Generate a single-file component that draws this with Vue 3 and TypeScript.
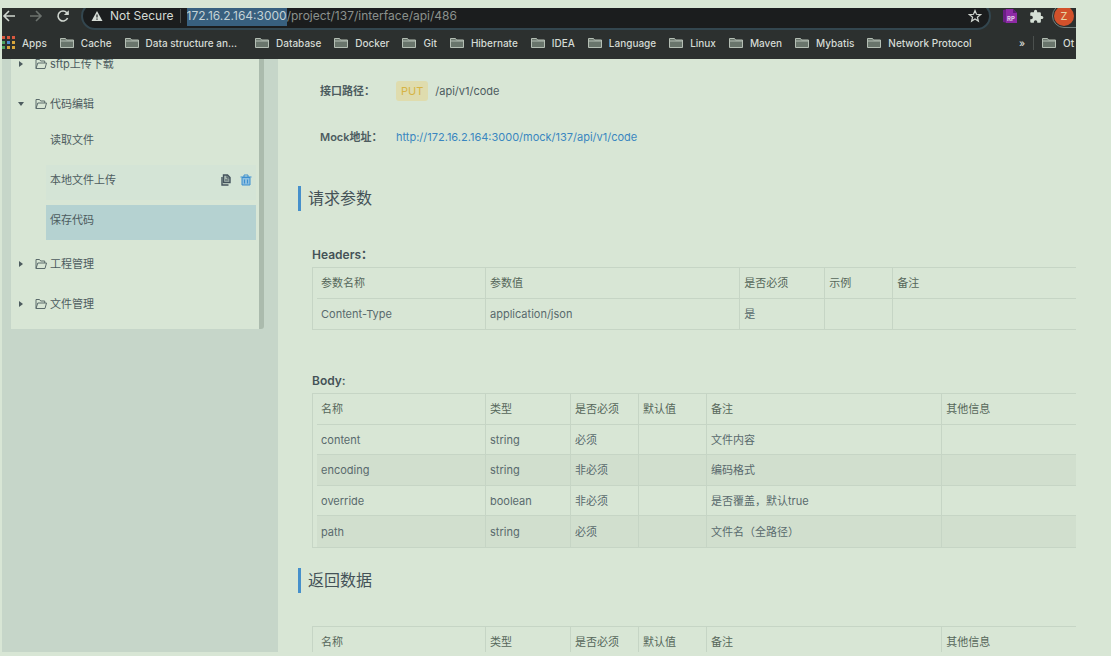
<script setup lang="ts">
import { onMounted, ref } from 'vue'

interface Field {
  name: string
  type: string
  required: string
  preset: string
  note: string
  extra: string
}

const url = ref('172.16.2.164:3000/project/137/interface/api/486')
const host = '172.16.2.164:3000'
const address = ref<HTMLInputElement | null>(null)

const bookmarks: string[] = [
  'Cache', 'Data structure an...', 'Database', 'Docker', 'Git', 'Hibernate', 'IDEA',
  'Language', 'Linux', 'Maven', 'Mybatis', 'Network Protocol',
]

const appColors: string[] = [
  '#d9583f', '#d9583f', '#d9583f',
  '#4fa35c', '#4b8bd0', '#d8a63c',
  '#4fa35c', '#d8a63c', '#d8a63c',
]

const folders = [
  { name: 'sftp上传下载', open: false, items: [] as string[] },
  { name: '代码编辑', open: true, items: ['读取文件', '本地文件上传', '保存代码'] },
  { name: '工程管理', open: false, items: [] as string[] },
  { name: '文件管理', open: false, items: [] as string[] },
]
const hovered = '本地文件上传'
const selected = ref('保存代码')

const headerColumns: string[] = ['参数名称', '参数值', '是否必须', '示例', '备注']
const bodyColumns: string[] = ['名称', '类型', '是否必须', '默认值', '备注', '其他信息']

const fields: Field[] = [
  { name: 'content', type: 'string', required: '必须', preset: '', note: '文件内容', extra: '' },
  { name: 'encoding', type: 'string', required: '非必须', preset: '', note: '编码格式', extra: '' },
  { name: 'override', type: 'boolean', required: '非必须', preset: '', note: '是否覆盖，默认true', extra: '' },
  { name: 'path', type: 'string', required: '必须', preset: '', note: '文件名（全路径）', extra: '' },
]

onMounted(() => {
  address.value?.focus()
  address.value?.setSelectionRange(0, host.length)
})
</script>

<template>
  <div class="page">
    <div class="frame">
      <header class="chrome">
        <div class="toolbar">
          <div class="nav">
            <button type="button" aria-label="Back">
              <svg class="line" viewBox="0 0 14 14" width="14" height="14"><path d="M13 7H2M7 2L2 7l5 5" /></svg>
            </button>
            <button type="button" aria-label="Forward" class="dim">
              <svg class="line" viewBox="0 0 14 14" width="14" height="14"><path d="M1 7h11M7 2l5 5-5 5" /></svg>
            </button>
            <button type="button" aria-label="Reload">
              <svg class="line" viewBox="0 0 14 14" width="14" height="14">
                <path d="M11.6 9A5 5 0 1 1 10.8 3.7L12 5" />
                <path class="solid" d="M12.8 1.2v4.9H7.9z" />
              </svg>
            </button>
          </div>
          <div class="omnibox">
            <svg viewBox="0 0 12 12" width="12" height="12">
              <path d="M6 1l5.5 10H.5z" fill="#d5dbd5" />
              <path d="M6 4.5v3M6 8.5v1.2" stroke="#1b1d1e" stroke-width="1.2" />
            </svg>
            <label for="address">Not Secure</label>
            <span class="bar"></span>
            <input id="address" ref="address" v-model="url" type="text" spellcheck="false" />
            <button type="button" aria-label="Bookmark this page">
              <svg class="line thin" viewBox="0 0 14 14" width="14" height="14">
                <path d="M7 1.6l1.5 3.7 4 .3-3.1 2.6 1 3.9L7 10l-3.4 2.1 1-3.9-3.1-2.6 4-.3z" />
              </svg>
            </button>
          </div>
          <div class="extensions">
            <button type="button" class="rp" aria-label="RP extension">
              <svg viewBox="0 0 14 14" width="14" height="14">
                <path d="M0 1l4-1v14l-4-1z" fill="#6b1f85" />
                <path d="M3 0h7l4 4v10H3z" fill="#8d2aa5" />
                <path d="M10 0l4 4h-4z" fill="#5b1a74" />
                <text x="4" y="12" font-size="6" font-weight="700" fill="#e6cfe9">RP</text>
              </svg>
            </button>
            <button type="button" aria-label="Extensions">
              <svg viewBox="0 0 24 24" width="15" height="15">
                <path fill="#d5dfd5" d="M20.5 11H19V7c0-1.1-.9-2-2-2h-4V3.5a2.5 2.5 0 0 0-5 0V5H4c-1.1 0-2 .9-2 2v3.8h1.5a2.7 2.7 0 0 1 0 5.4H2V20c0 1.1.9 2 2 2h3.8v-1.5a2.7 2.7 0 0 1 5.4 0V22H17c1.1 0 2-.9 2-2v-4h1.5a2.5 2.5 0 0 0 0-5z" />
              </svg>
            </button>
            <button type="button" class="profile" aria-label="Profile"><span>Z</span></button>
          </div>
        </div>

        <nav class="bookmarks">
          <a href="#">
            <span class="dots"><i v-for="(c, i) in appColors" :key="i" :style="{ background: c }"></i></span>
            Apps
          </a>
          <a v-for="b in bookmarks" :key="b" href="#" :class="{ truncated: b.endsWith('...') }">
            <svg viewBox="0 0 14 12" width="14" height="12"><path d="M.5 10.5v-9h5l1 1.5h7v7.500z" fill="#69756c" stroke="#b4beb4" /><path d="M.5 4h13" stroke="#b4beb4" /></svg>
            {{ b }}
          </a>
          <div class="more">
            <button type="button" aria-label="More bookmarks">»</button>
            <span class="bar"></span>
            <a href="#">
              <svg viewBox="0 0 14 12" width="14" height="12"><path d="M.5 10.5v-9h5l1 1.5h7v7.500z" fill="#69756c" stroke="#b4beb4" /><path d="M.5 4h13" stroke="#b4beb4" /></svg>
              Ot
            </a>
          </div>
        </nav>
      </header>

      <div class="main">
        <aside class="sidebar">
          <div class="scroller">
            <ul class="tree">
              <li v-for="f in folders" :key="f.name">
                <button type="button" class="folder" :aria-expanded="f.open">
                  <svg class="caret" :class="{ open: f.open }" viewBox="0 0 6 6" width="6" height="6"><path d="M1 0l4 3-4 3z" /></svg>
                  <svg class="dir" viewBox="0 0 12 12" width="12" height="12">
                    <path d="M1 10.5v-9h3.5l1.2 1.5h4V5M1 10.5L2.800 5h8.700L10 10.5z" />
                  </svg>
                  {{ f.name }}
                </button>
                <ul v-if="f.open" class="leaves">
                  <li v-for="item in f.items" :key="item" :class="{ selected: item === selected, hovered: item === hovered }">
                    <a href="#" @click.prevent="selected = item">{{ item }}</a>
                    <span v-if="item === hovered" class="actions">
                      <button type="button" aria-label="复制">
                        <svg viewBox="0 0 12 12" width="12" height="12">
                          <path d="M3.5 1h4L10 3.5v5H3.5z" fill="#a9b9b2" stroke="#44535c" stroke-width="1.4" />
                          <path d="M2 3v8h6.5" fill="none" stroke="#44535c" stroke-width="1.4" />
                          <path d="M7 1v3h3M5 6h3.5" fill="none" stroke="#44535c" />
                        </svg>
                      </button>
                      <button type="button" aria-label="删除">
                        <svg viewBox="0 0 12 12" width="12" height="12">
                          <path d="M2 3.5h8v7.500H2z" fill="#8dbfe0" stroke="#3c8fd0" />
                          <path d="M.5 3h11M4 3V1h4v2M4.5 5.5v4M7.5 5.5v4" fill="none" stroke="#3c8fd0" />
                        </svg>
                      </button>
                    </span>
                  </li>
                </ul>
              </li>
            </ul>
          </div>
        </aside>

        <main class="content">
          <dl class="facts">
            <dt>接口路径：</dt>
            <dd><span class="method">PUT</span>/api/v1/code</dd>
            <dt>Mock地址：</dt>
            <dd><a href="#">http://172.16.2.164:3000/mock/137/api/v1/code</a></dd>
          </dl>

          <h2>请求参数</h2>
          <h3 id="headers-title">Headers：</h3>
          <div class="grid">
            <table aria-labelledby="headers-title">
              <colgroup>
                <col class="c-name" /><col class="c-value" /><col class="c-type" /><col class="c-flag" /><col />
              </colgroup>
              <thead><tr><th v-for="c in headerColumns" :key="c">{{ c }}</th></tr></thead>
              <tbody>
                <tr><td>Content-Type</td><td>application/json</td><td>是</td><td></td><td></td></tr>
              </tbody>
            </table>
          </div>

          <h3 id="body-title" class="second">Body:</h3>
          <div class="grid">
            <table aria-labelledby="body-title">
              <colgroup>
                <col class="c-name" /><col class="c-type" /><col class="c-flag" /><col class="c-flag" /><col class="c-note" /><col />
              </colgroup>
              <thead><tr><th v-for="c in bodyColumns" :key="c">{{ c }}</th></tr></thead>
              <tbody>
                <tr v-for="f in fields" :key="f.name">
                  <td>{{ f.name }}</td><td>{{ f.type }}</td><td>{{ f.required }}</td>
                  <td>{{ f.preset }}</td><td>{{ f.note }}</td><td>{{ f.extra }}</td>
                </tr>
              </tbody>
            </table>
          </div>

          <h2 id="result-title" class="result">返回数据</h2>
          <div class="grid">
            <table aria-labelledby="result-title">
              <colgroup>
                <col class="c-name" /><col class="c-type" /><col class="c-flag" /><col class="c-flag" /><col class="c-note" /><col />
              </colgroup>
              <thead><tr><th v-for="c in bodyColumns" :key="c">{{ c }}</th></tr></thead>
            </table>
          </div>
        </main>
      </div>
    </div>
  </div>
</template>

<style>
body {
  margin: 0;
  background: #d8e6d5;
}
</style>

<style scoped>
* {
  box-sizing: border-box;
}
.page {
  height: 100vh;
  padding: 8px 35px 4px 2px;
  background: #d8e6d5;
  color: #4d5c5f;
  font: 11px/20px Inter, "Noto Sans CJK SC", sans-serif;
}
.frame {
  height: 100%;
  display: flex;
  flex-direction: column;
  overflow: hidden;
}
button {
  padding: 0;
  border: 0;
  background: none;
  color: inherit;
  font: inherit;
  display: flex;
  align-items: center;
}
a {
  color: inherit;
  text-decoration: none;
}
ul {
  margin: 0;
  padding: 0;
  list-style: none;
}

/* browser bars */
.chrome {
  flex: none;
  height: 51px;
  display: flex;
  flex-direction: column;
  justify-content: flex-end;
  overflow: hidden;
  background: #2c302f;
  color: #d5dbd5;
}
.toolbar {
  flex: none;
  height: 28px;
  display: flex;
  align-items: center;
}
.nav {
  width: 79px;
  display: flex;
  gap: 13px;
}
.line {
  fill: none;
  stroke: #d0d6d0;
  stroke-width: 1.6;
}
.line.thin {
  stroke-width: 1.2;
}
.dim .line {
  stroke: #6c726e;
}
.solid {
  fill: #d0d6d0;
  stroke: none;
}
.omnibox {
  flex: 1;
  height: 28px;
  padding: 0 7px 0 8px;
  display: flex;
  align-items: center;
  border: 2px solid #33464f;
  border-radius: 14px;
  background: #1b1d1e;
  font-size: 12px;
}
.omnibox label {
  margin-left: 7px;
  white-space: nowrap;
}
.bar {
  flex: none;
  width: 1px;
  height: 14px;
  margin: 0 6px;
  background: #4b504e;
}
.omnibox input {
  flex: 1;
  min-width: 0;
  padding: 0;
  border: 0;
  outline: 0;
  background: none;
  color: #8b918d;
  font: inherit;
}
.omnibox input::selection {
  background: #38607f;
  color: #c3d2d6;
}
.extensions {
  flex: none;
  width: 85px;
  padding-left: 12px;
  display: flex;
  align-items: center;
  gap: 8px;
  overflow: hidden;
}
.extensions button {
  flex: none;
}
.rp {
  margin-right: 4px;
}
.profile {
  width: 40px;
  height: 24px;
  padding-left: 1px;
  border: 1px solid #71807f;
  border-radius: 12px;
}
.profile span {
  width: 20px;
  height: 20px;
  border-radius: 50%;
  background: #d2512b;
  color: #e8d4a4;
  text-align: center;
}
.bookmarks {
  flex: none;
  height: 29px;
  padding-bottom: 4px;
  display: flex;
  align-items: center;
  gap: 13px;
  font-size: 10px;
  font-weight: 500;
  white-space: nowrap;
}
.bookmarks a {
  display: flex;
  align-items: center;
  gap: 7px;
}
.bookmarks .truncated {
  padding-right: 5px;
}
.bookmarks svg {
  flex: none;
}
.dots {
  display: grid;
  grid-template-columns: repeat(3, 3px);
  gap: 2px;
}
.dots i {
  height: 3px;
}
.more {
  width: 57px;
  margin-left: auto;
  display: flex;
  align-items: center;
  overflow: hidden;
}
.more .bar {
  margin: 0 8px;
}

/* interface tree */
.main {
  flex: 1;
  min-height: 0;
  display: flex;
  overflow: hidden;
}
.sidebar {
  flex: none;
  width: 276px;
  padding: 0 14px 0 9px;
  background: #c6d6c9;
}
.scroller {
  border-right: 5px solid #abbbad;
  border-bottom-right-radius: 3px;
  overflow: hidden;
}
.tree {
  margin-top: -15px;
  padding: 0 3px 5px 7px;
  background: #d8e6d5;
}
.folder {
  height: 40px;
}
.caret {
  margin-right: 11px;
  fill: #4d5c5f;
}
.caret.open {
  transform: rotate(90deg);
}
.dir {
  margin-right: 3px;
  fill: none;
  stroke: #5a6a6b;
}
.leaves {
  padding-left: 28px;
}
.leaves li {
  height: 35px;
  margin: 1px 0 4px;
  padding: 0 4px 5px;
  display: flex;
  align-items: center;
  justify-content: space-between;
}
.leaves li + li {
  margin-top: 5px;
}
.leaves .hovered {
  background: #d4e4d6;
}
.leaves .selected {
  background: #b5d2d1;
}
.actions {
  display: flex;
  gap: 8px;
}

/* interface details */
.content {
  flex: 1;
  min-width: 0;
  padding: 9px 0 0 20px;
}
.facts {
  margin: 0;
  padding-left: 22px;
  display: grid;
  grid-template-columns: 76px 1fr;
  grid-auto-rows: 46px;
  align-items: center;
}
.facts dt {
  font-weight: 600;
  white-space: nowrap;
}
.facts dd {
  margin: 0;
}
.facts a {
  color: #3a86c0;
}
.method {
  display: inline-block;
  margin-right: 7px;
  padding: 0 5px;
  border-radius: 3px;
  background: #dfdcae;
  color: #d6b445;
}
h2 {
  margin: 26px 0 0;
  padding-left: 7px;
  border-left: 3px solid #4690cb;
  color: #445257;
  font-size: 16px;
  font-weight: 400;
  line-height: 25px;
}
h3 {
  margin: 34px 0 2px 14px;
  color: #445257;
  font-size: 12px;
  font-weight: 600;
  line-height: 20px;
}
h3.second {
  margin-top: 41px;
}
h2.result {
  margin: 20px 0 33px;
}
.grid {
  margin-left: 14px;
  padding-left: 4px;
  border: 1px solid #c6d5c5;
  border-right: 0;
}
table {
  width: 100%;
  table-layout: fixed;
  border-collapse: separate;
  border-spacing: 0;
}
.c-name { width: 169px; }
.c-value { width: 33.5%; }
.c-type { width: 85px; }
.c-flag { width: 68px; }
.c-note { width: 31%; }
th,
td {
  height: 31px;
  padding: 0 4px;
  border-right: 1px solid #c6d5c5;
  border-bottom: 1px solid #c6d5c5;
  text-align: left;
  font-weight: 400;
  white-space: nowrap;
}
th {
  color: #56665a;
}
td {
  color: #596a6d;
}
th:last-child,
td:last-child {
  border-right: 0;
}
tbody tr:nth-child(odd) td {
  height: 30px;
}
tbody tr:nth-child(even) td {
  background: #d1dfce;
}
tbody tr:last-child td {
  border-bottom: 0;
}
</style>
